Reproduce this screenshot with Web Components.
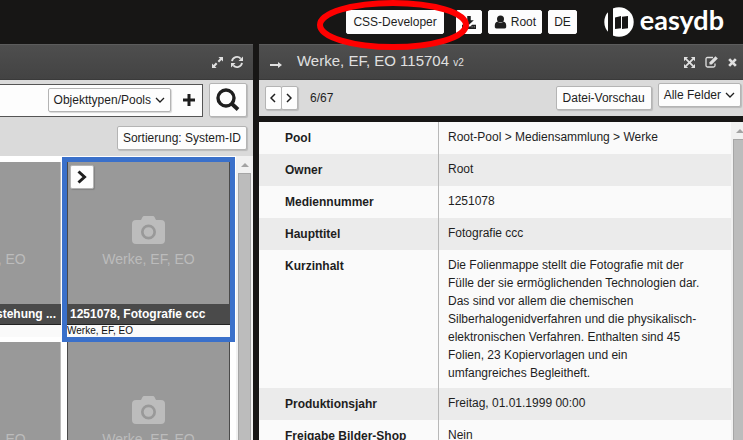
<!DOCTYPE html>
<html lang="de">
<head>
<meta charset="utf-8">
<title>easydb</title>
<style>
html, body { margin: 0; height: 100%; }
body { background: #171615; font-family: "Liberation Sans", Arial, sans-serif; font-size: 12px; color: #1e1e1e; overflow: hidden; }
</style>
</head>
<body>
<edb-app></edb-app>
<script>
const ICONS = {
  download: ['0 0 16 16', '<path d="M6 1h4v5h3.500L8 11 2.500 6H6z"/><path d="M0 11h4.500l2 2h3l2-2H16v5H0z"/><path d="M11 13h1v1h-1zM13.500 13h1v1h-1z" fill="#fff"/>'],
  user: ['0 0 14 16', '<circle cx="7" cy="4.500" r="4"/><path d="M3.500 7.500Q7 10.500 10.500 7.500 14 8.500 13.500 14 13 15.500 11.500 15.500h-9Q1 15.500.5 14 0 8.500 3.500 7.500z"/>'],
  expand: ['0 0 12 12', '<path d="M7 0h5v5l-1.700-1.700-2.600 2.600-1.600-1.600 2.600-2.600zM0 12V7l1.700 1.700 2.600-2.600 1.600 1.600-2.600 2.600L5 12z"/>'],
  refresh: ['0 0 12 12', '<path d="M1 5.200A5 5 0 0 1 9.700 2.700M11 6.800A5 5 0 0 1 2.300 9.300" fill="none" stroke="currentColor" stroke-width="1.800"/><path d="M12 .5V5H7.500zM0 11.500V7h4.500z"/>'],
  full: ['0 0 12 12', '<path d="M0 0h4.500L0 4.500zM12 0v4.500L7.500 0zM0 12V7.500L4.500 12zM12 12H7.500L12 7.500z"/><path d="M2 2l8 8M10 2l-8 8" stroke="currentColor" stroke-width="2"/>'],
  edit: ['0 0 13 12', '<path d="M8 1.500H2.500Q1 1.500 1 3v6.500Q1 11 2.500 11H8.500Q10 11 10 9.500V7.500" fill="none" stroke="currentColor" stroke-width="1.300"/><path d="M4.500 8.500V6.200L10.500.3 12.800 2.500 6.800 8.500z"/>'],
  close: ['0 0 10 10', '<path d="M1.300 1.300l7.400 7.400M8.700 1.300L1.300 8.700" stroke="currentColor" stroke-width="3"/>'],
  arrow: ['0 0 12 8', '<path d="M0 3h8V1l4 3-4 3V5H0z"/>'],
  down: ['0 0 10 6', '<path d="M1 1l4 4 4-4" fill="none" stroke="currentColor" stroke-width="1.300"/>'],
  left: ['0 0 6 10', '<path d="M5 1L1 5l4 4" fill="none" stroke="currentColor" stroke-width="1.500"/>'],
  right: ['0 0 6 10', '<path d="M1 1l4 4-4 4" fill="none" stroke="currentColor" stroke-width="1.500"/>'],
  open: ['0 0 10 14', '<path d="M1.500 1.500L7.500 7l-6 5.500" fill="none" stroke="currentColor" stroke-width="3"/>'],
  plus: ['0 0 12 12', '<path d="M4.500 0h3v4.500H12v3H7.500V12h-3V7.500H0v-3h4.500z"/>'],
  search: ['0 0 24 24', '<circle cx="10" cy="10" r="8" fill="none" stroke="currentColor" stroke-width="3.400"/><path d="M15.500 15.500l6.500 6" stroke="currentColor" stroke-width="3.800"/>'],
  camera: ['0 0 33 28', '<path fill-rule="evenodd" d="M4 4h5l1.500-3Q11 0 12 0h9q1 0 1.500 1L24 4h5q4 0 4 4v16q0 4-4 4H4q-4 0-4-4V8q0-4 4-4zM16.500 8.500a7.500 7.500 0 1 0 0 15 7.500 7.500 0 0 0 0-15zM16.500 11.200a4.800 4.800 0 1 1 0 9.600 4.800 4.800 0 0 1 0-9.600z"/>'],
  up: ['0 0 8 4', '<path d="M4 0l4 4H0z"/>']
};

function define(name, html, setup) {
  const template = document.createElement('template');
  template.innerHTML = html;
  customElements.define(name, class extends HTMLElement {
    constructor() {
      super();
      this.attachShadow({ mode: 'open' }).append(template.content.cloneNode(true));
    }
    connectedCallback() { if (setup) setup(this, this.shadowRoot); }
  });
}

define('edb-icon', '<style>:host{display:inline-flex;flex:none}svg{display:block;fill:currentColor}</style>', (el, root) => {
  const [box, body] = ICONS[el.getAttribute('name')];
  const [, , w, h] = box.split(' ');
  root.innerHTML += `<svg aria-hidden="true" viewBox="${box}" width="${el.getAttribute('w') || w}" height="${el.getAttribute('h') || h}">${body}</svg>`;
});

define('edb-button', `<style>
:host{display:inline-flex;flex:none}
button{display:flex;align-items:center;justify-content:center;gap:4px;box-sizing:border-box;width:100%;height:24px;padding:0 var(--pad,5px);
 border:1px solid #b4b4b4;border-radius:2px;background:#fdfdfd;color:#1e1e1e;font:inherit;white-space:nowrap;box-shadow:1px 1px 1px rgba(0,0,0,.15)}
:host([large]) button{height:34px}
:host([plain]) button{border-color:#fdfdfd;box-shadow:none}
:host([bare]) button{border:0;padding:0;background:none;color:inherit;box-shadow:none;height:20px}
</style><button type="button"><slot></slot></button>`, (el, root) => {
  if (el.hasAttribute('label')) root.querySelector('button').setAttribute('aria-label', el.getAttribute('label'));
});

define('edb-logo', `<style>
:host{display:flex;align-items:center;gap:6px;color:#fff;font:bold 27px/30px Lato,sans-serif}
svg{display:block}span{margin-top:-4px}
</style><svg width="30" height="30" viewBox="0 0 30 30" aria-hidden="true">
<circle cx="15" cy="15" r="14.700" fill="#fff"/><path d="M4 0h5v30H4z" fill="#171615"/>
<path d="M11 10.500L17 9v12.200l-6 .8zM18 9.800L24 9v12.200l-6 .8z" fill="#171615"/></svg><span>easydb</span>`);

define('edb-topbar', `<style>
:host{display:flex;align-items:center;justify-content:flex-end;height:44px;gap:6px;padding-right:19px;position:relative}
.dev{margin-right:6px;--pad:6px}edb-logo{margin-left:21px}
.mark{position:absolute;right:274px;top:0;pointer-events:none;overflow:visible;z-index:2}
</style>
<edb-button plain class="dev">CSS-Developer</edb-button>
<edb-button plain label="Download"><edb-icon name="download" w="14" h="14"></edb-icon></edb-button>
<edb-button plain><edb-icon name="user" w="13" h="14"></edb-icon>Root</edb-button>
<edb-button plain>DE</edb-button>
<edb-logo></edb-logo>
<svg class="mark" width="152" height="50" viewBox="0 0 152 50" aria-hidden="true"><ellipse cx="76" cy="25" rx="73" ry="22" fill="none" stroke="#f00" stroke-width="6"/></svg>`);

define('edb-panel', `<style>
:host{display:flex;flex-direction:column;min-width:0;min-height:0}
header{display:flex;align-items:center;flex:none;box-sizing:border-box;height:36px;padding:0 var(--head-pad,10px);
 background:linear-gradient(#4e4e4e,#434343);border-top:1px solid #5c5c5c;border-bottom:1px solid #3a3a3a;color:#e0e0e0}
</style><header><slot name="head"></slot></header><slot></slot>`);

define('edb-scrollbar', `<style>
:host{display:flex;flex-direction:column;align-items:flex-start;flex:none;overflow:hidden;background:#f1f1f1;color:#a3a3a3}
edb-icon{padding:7px 5px 6px}
i{flex:1;box-sizing:border-box;width:13px;margin-left:2px;background:#bcbcbc;border:1px solid #a6a6a6;border-bottom:0}
</style><edb-icon name="up"></edb-icon><i></i>`);

define('edb-card', `<style>
:host{display:flex;flex-direction:column;height:175px;background:#fafafa}
:host([selected]){outline:5px solid #3a70ca;z-index:1}
.pic{position:relative;flex:none;box-sizing:border-box;height:142px;background:#999;border:solid #4a4a4a;border-width:0 1px;
 color:#bcbcbc;font-size:14px;line-height:18px;display:flex;flex-direction:column;align-items:center;padding-top:54px;gap:6px}
:host([edge]) .pic{border-color:#bbb}
.open{position:absolute;left:2px;top:3px}
.cap{background:#4a4a4a;color:#fff;font-weight:bold;line-height:20px;padding:0 5px 0 3px;white-space:nowrap;border-bottom:1px solid #222}
:host([edge]) .cap{text-align:right}
.sub{font-size:10px;line-height:12px;color:#111}
</style><div class="pic"><edb-icon name="camera"></edb-icon><span>Werke, EF, EO</span><div class="open"><slot name="open"></slot></div></div>
<div class="cap"><slot></slot></div><div class="sub"><slot name="sub"></slot></div>`);

define('edb-results', `<style>
:host{display:flex;flex:none;width:34.050%}
edb-panel{flex:1}
.heads{display:flex;flex:1;justify-content:flex-end;gap:8px}
.tools{flex:none;background:#dadada;box-sizing:border-box;height:76px;padding:3px 6px 0 0;display:flex;flex-direction:column;align-items:flex-end;gap:9px}
.query{display:flex;align-items:center;align-self:stretch;gap:6px}
.box{flex:1;min-width:0;box-sizing:border-box;height:33px;display:flex;align-items:center;justify-content:flex-end;gap:12px;padding-right:7px;background:#fdfdfd;border:1px solid #555;border-left:0;color:#1e1e1e}
input{flex:1;width:0;min-width:0;border:0;background:none;font:inherit;padding:0}
.list{display:flex;flex:1;min-height:0;background:#fff}
.grid{flex:1;min-width:0;overflow:hidden;display:grid;grid-template-columns:163px 163px;grid-auto-rows:175px;gap:5px 6px;justify-content:end;padding:6px 6px 0 0}
edb-scrollbar{width:17px}
</style><edb-panel><div class="heads" slot="head">
<edb-button bare label="Vergrößern"><edb-icon name="expand" w="11" h="11"></edb-icon></edb-button>
<edb-button bare label="Aktualisieren"><edb-icon name="refresh"></edb-icon></edb-button></div>
<div class="tools"><div class="query"><div class="box"><input type="text" aria-label="Suche">
<edb-button>Objekttypen/Pools<edb-icon name="down"></edb-icon></edb-button>
<edb-button bare label="Hinzufügen"><edb-icon name="plus"></edb-icon></edb-button></div>
<edb-button large label="Suchen" style="--pad:6px"><edb-icon name="search"></edb-icon></edb-button></div>
<edb-button>Sortierung: System-ID</edb-button></div>
<div class="list"><div class="grid">
<edb-card edge>stehung ...</edb-card>
<edb-card selected><edb-button slot="open" label="Öffnen" style="--pad:6px"><edb-icon name="open"></edb-icon></edb-button>1251078, Fotografie ccc<span slot="sub">Werke, EF, EO</span></edb-card>
<edb-card edge></edb-card><edb-card></edb-card>
</div><edb-scrollbar></edb-scrollbar></div></edb-panel>`);

define('edb-detail', `<style>
:host{display:flex;flex:1;min-width:0}
edb-panel{flex:1;--head-pad:6px}
.heads{display:flex;flex:1;align-items:center;gap:10px;padding-left:5px}
.heads>edb-icon{padding-top:5px}
h1{flex:1;margin:0 0 0 5px;font-size:15px;line-height:20px;font-weight:normal}
small{font-size:10px}
.tools{flex:none;display:flex;align-items:center;box-sizing:border-box;height:36px;padding:0 2px 0 6px;background:#dadada}
.nav{display:flex}.nav edb-button{width:17px;--pad:0}.nav edb-button+edb-button{margin-left:-1px}
.count{flex:1;margin-left:12px}
.preview{--pad:6px}
.alt{align-self:flex-start;margin:3px 0 0 6px}
.body{flex:1;min-height:0;display:flex;margin-top:6px;background:#fafafa}
.scroll{flex:1;min-width:0;overflow:hidden}
table{width:100%;border-collapse:collapse;table-layout:fixed}
tr{background:#fafafa}tr:nth-child(even){background:#ebebeb}
th,td{vertical-align:top;text-align:left}
th{width:153px;padding:6px 0 6px 26px;line-height:20px}
td{padding:6px 24px 6px 9px;line-height:18px;border-left:1px solid #b8b8b8}
edb-scrollbar{width:12px}
</style><edb-panel><div class="heads" slot="head"><edb-icon name="arrow"></edb-icon>
<h1>Werke, EF, EO 115704 <small>v2</small></h1>
<edb-button bare label="Vollbild"><edb-icon name="full" w="11" h="11"></edb-icon></edb-button>
<edb-button bare label="Bearbeiten"><edb-icon name="edit"></edb-icon></edb-button>
<edb-button bare label="Schließen"><edb-icon name="close" w="9" h="9"></edb-icon></edb-button></div>
<div class="tools"><div class="nav"><edb-button label="Zurück"><edb-icon name="left"></edb-icon></edb-button><edb-button label="Weiter"><edb-icon name="right"></edb-icon></edb-button></div>
<span class="count">6/67</span><edb-button class="preview">Datei-Vorschau</edb-button><edb-button class="alt">Alle Felder<edb-icon name="down"></edb-icon></edb-button></div>
<div class="body"><div class="scroll"><table><tbody>
<tr><th scope="row">Pool</th><td>Root-Pool &gt; Mediensammlung &gt; Werke</td></tr>
<tr><th scope="row">Owner</th><td>Root</td></tr>
<tr><th scope="row">Mediennummer</th><td>1251078</td></tr>
<tr><th scope="row">Haupttitel</th><td>Fotografie ccc</td></tr>
<tr><th scope="row">Kurzinhalt</th><td>Die Folienmappe stellt die Fotografie mit der Fülle der sie ermöglichenden Technologien dar. Das sind vor allem die chemischen Silberhalogenidverfahren und die physikalisch-elektronischen Verfahren. Enthalten sind 45 Folien, 23 Kopiervorlagen und ein umfangreiches Begleitheft.</td></tr>
<tr><th scope="row">Produktionsjahr</th><td>Freitag, 01.01.1999 00:00</td></tr>
<tr><th scope="row">Freigabe Bilder-Shop</th><td>Nein</td></tr>
</tbody></table></div><edb-scrollbar></edb-scrollbar></div></edb-panel>`);

define('edb-app', `<style>
:host{display:flex;flex-direction:column;height:100vh}
main{flex:1;min-height:0;display:flex;gap:6px}
</style><edb-topbar></edb-topbar><main><edb-results></edb-results><edb-detail></edb-detail></main>`);
</script>
</body>
</html>
